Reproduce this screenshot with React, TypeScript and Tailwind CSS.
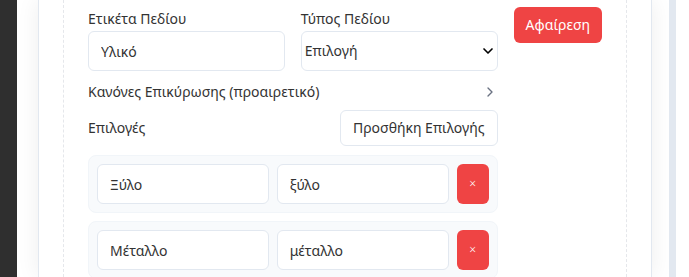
import { ChevronDown, ChevronRight } from "lucide-react";

const options = [
  { label: "Ξύλο", value: "ξύλο" },
  { label: "Μέταλλο", value: "μέταλλο" },
];

export default function App() {
  return (
    <div
      className="flex h-[277px] overflow-hidden bg-white text-sm text-[#333]"
      style={{ fontFamily: '"Noto Sans", "Open Sans", sans-serif' }}
    >
      <div className="w-[17px] shrink-0 bg-[#2f2f2f]" />
      <div className="flex min-w-0 flex-1 pl-[21px] pr-[17px]">
        <div className="min-w-0 flex-1 border-x border-slate-200 bg-white px-6 shadow-[0_0_22px_rgba(0,0,0,0.07)]">
          <div className="h-full border-x border-dashed border-gray-200 px-6 pt-[7px]">
            <div className="flex items-start gap-4">
              <div className="min-w-0 flex-1">
                <div className="grid grid-cols-2 gap-4">
                  <div>
                    <label className="block leading-6">Ετικέτα Πεδίου</label>
                    <input
                      defaultValue="Υλικό"
                      className="h-10 w-full rounded-md border border-slate-200 bg-white px-3 text-sm text-[#333] outline-none"
                    />
                  </div>
                  <div>
                    <label className="block leading-6">Τύπος Πεδίου</label>
                    <div className="relative">
                      <select
                        defaultValue="select"
                        className="h-10 w-full appearance-none rounded-md border border-slate-200 bg-white pl-[3px] text-sm text-[#333] outline-none"
                      >
                        <option value="select">Επιλογή</option>
                      </select>
                      <ChevronDown
                        size={16}
                        strokeWidth={2.5}
                        className="pointer-events-none absolute right-[2px] top-3 text-black"
                      />
                    </div>
                  </div>
                </div>

                <div className="mt-[11px] flex items-center justify-between leading-5">
                  <span>Κανόνες Επικύρωσης (προαιρετικό)</span>
                  <ChevronRight size={16} className="text-gray-500" />
                </div>

                <div className="mt-2 flex items-center justify-between">
                  <span>Επιλογές</span>
                  <button className="h-9 rounded-md border border-slate-200 bg-white px-3 text-sm text-[#333]">
                    Προσθήκη Επιλογής
                  </button>
                </div>

                <div className="mt-[9px] space-y-2">
                  {options.map((o) => (
                    <div
                      key={o.value}
                      className="flex gap-2 rounded-lg border border-slate-100 bg-slate-50 p-2"
                    >
                      <input
                        defaultValue={o.label}
                        className="h-10 min-w-0 flex-1 rounded-md border border-slate-200 bg-white px-3 text-sm text-[#333] outline-none"
                      />
                      <input
                        defaultValue={o.value}
                        className="h-10 min-w-0 flex-1 rounded-md border border-slate-200 bg-white px-3 text-sm text-[#333] outline-none"
                      />
                      <button className="h-10 w-8 shrink-0 rounded-md bg-[#ef4444] text-xs font-light text-white">
                        ×
                      </button>
                    </div>
                  ))}
                </div>
              </div>
              <button className="h-9 shrink-0 rounded-md bg-[#ef4444] px-3 text-sm text-white">
                Αφαίρεση
              </button>
            </div>
          </div>
        </div>
      </div>
      <div className="w-[7px] shrink-0 bg-slate-200" />
      <div className="w-[13px] shrink-0 bg-white" />
    </div>
  );
}
